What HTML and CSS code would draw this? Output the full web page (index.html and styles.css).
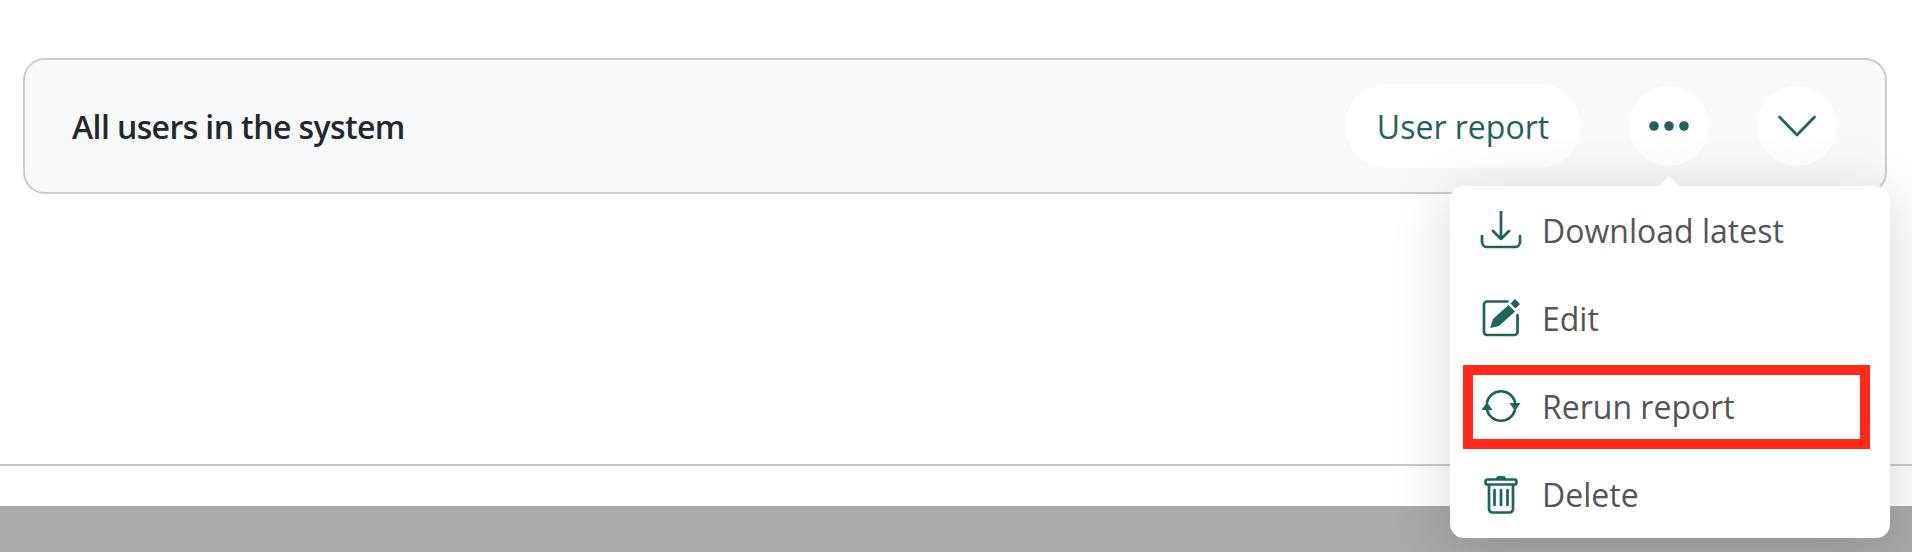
FILE: index.html
```html
<!DOCTYPE html>
<html lang="en">
<head>
<meta charset="utf-8">
<title>All users in the system</title>
<link rel="stylesheet" href="styles.css">
</head>
<body>
<main class="page">
  <section class="card">
    <h2 class="title">All users in the system</h2>
    <div class="actions">
      <button class="pill">User report</button>
      <div class="more">
        <button class="round" aria-label="More">
          <svg class="dots" width="40" height="10" viewBox="0 0 40 10"><circle cx="5" cy="5" r="4.8"/><circle cx="20" cy="5" r="4.8"/><circle cx="35" cy="5" r="4.8"/></svg>
        </button>
        <div class="menu">
          <span class="caret"></span>
          <a class="item">
            <span class="ico"><svg width="42" height="38" viewBox="0 0 42 38"><g class="line"><path d="M21 1v27M13 20l8 8 8-8"/><path d="M2 25v6a5 5 0 0 0 5 5h28a5 5 0 0 0 5-5v-6"/></g></svg></span>
            <span>Download latest</span>
          </a>
          <a class="item">
            <span class="ico"><svg width="42" height="40" viewBox="-2 0 42 40"><g class="line"><path d="M25.500 3.500H5a3 3 0 0 0-3 3V34a3 3 0 0 0 3 3h27.500a3 3 0 0 0 3-3V17"/></g><path class="fill" d="M8 30l3-9 15.500-14 6.500 6.500L17 28zM28.500 5.500 33 1l5 5-4.500 4.500z"/></svg></span>
            <span>Edit</span>
          </a>
          <a class="item">
            <span class="ico"><svg width="42" height="34" viewBox="-1 0 42 34"><g class="line"><path d="M6 13A14.500 14.500 0 0 1 34 13"/><path d="M34 21A14.500 14.500 0 0 1 6 21"/></g><path class="fill" d="M.5 21 6 13l5.500 8zM28.500 14h11L34 22z"/></svg></span>
            <span>Rerun report</span>
          </a>
          <a class="item">
            <span class="ico"><svg width="34" height="39" viewBox="0 0 34 39"><g class="line"><rect x="1.500" y="4.500" width="31" height="5" rx="2"/><path d="M5 10v24a3.500 3.500 0 0 0 3.500 3.500h17a3.500 3.500 0 0 0 3.500-3.500V10"/><path d="M10.500 15v15M17 15v15M23.500 15v15"/></g><path class="fill" d="M12 4a3 3 0 0 1 3-3h4a3 3 0 0 1 3 3v1H12z"/></svg></span>
            <span>Delete</span>
          </a>
          <div class="highlight"></div>
        </div>
      </div>
      <button class="round" aria-label="Expand">
        <svg width="38" height="22" viewBox="0 0 38 22"><path class="line" d="M1.500 2 19 20 36.500 2"/></svg>
      </button>
    </div>
  </section>
  <hr class="rule">
  <div class="backdrop"></div>
</main>
</body>
</html>
```

FILE: styles.css
```css
* { box-sizing: border-box; }
html, body { margin: 0; height: 552px; overflow: hidden; background: #fff; }
body { font-family: "Open Sans", "Noto Sans", sans-serif; }
.page { display: flex; flex-direction: column; height: 552px; padding-top: 58px; }
.card {
  display: flex; align-items: center; justify-content: space-between;
  height: 136px; margin: 0 25px 0 23px; padding: 0 48px 0 47px;
  background: #f8f9fa; border: 2px solid #ccc; border-radius: 22px;
}
.title { margin: 0; font-size: 32px; font-weight: 600; letter-spacing: -0.6px; color: #24272c; }
.actions { display: flex; align-items: center; gap: 48px; }
.pill, .round {
  display: flex; align-items: center; justify-content: center;
  border: 0; background: #fff; color: #1f635c; font-family: inherit; padding: 0;
}
.pill { width: 236px; height: 84px; border-radius: 42px; font-size: 32px; }
.round { width: 80px; height: 80px; border-radius: 50%; }
.dots { fill: #1f635c; }
.more { position: relative; width: 80px; height: 80px; }
.line { fill: none; stroke: #1f635c; stroke-width: 2.7; stroke-linecap: round; stroke-linejoin: round; }
.fill { fill: #1f635c; }
.menu {
  position: absolute; top: 100px; left: -179px; width: 440px; height: 352px;
  display: flex; flex-direction: column;
  background: #fff; border-radius: 14px;
  box-shadow: 0 10px 60px rgba(0,0,0,.16);
}
.caret {
  position: absolute; top: -10px; left: 209px; width: 0; height: 0;
  border-left: 10px solid transparent; border-right: 10px solid transparent;
  border-bottom: 10px solid #fff;
}
.item {
  display: flex; align-items: center; gap: 20px; height: 88px; padding-left: 30px;
  font-size: 32px; color: #555;
}
.ico { display: flex; justify-content: center; align-items: center; width: 42px; }
.highlight {
  position: absolute; left: 13px; top: 179px; width: 407px; height: 84px;
  border: 10px solid #ff2a1a;
}
.rule { margin: 270px 0 0; border: 0; height: 2px; background: #c8c8c8; }
.backdrop { margin-top: 40px; flex: 1; background: #aaa; }
```
